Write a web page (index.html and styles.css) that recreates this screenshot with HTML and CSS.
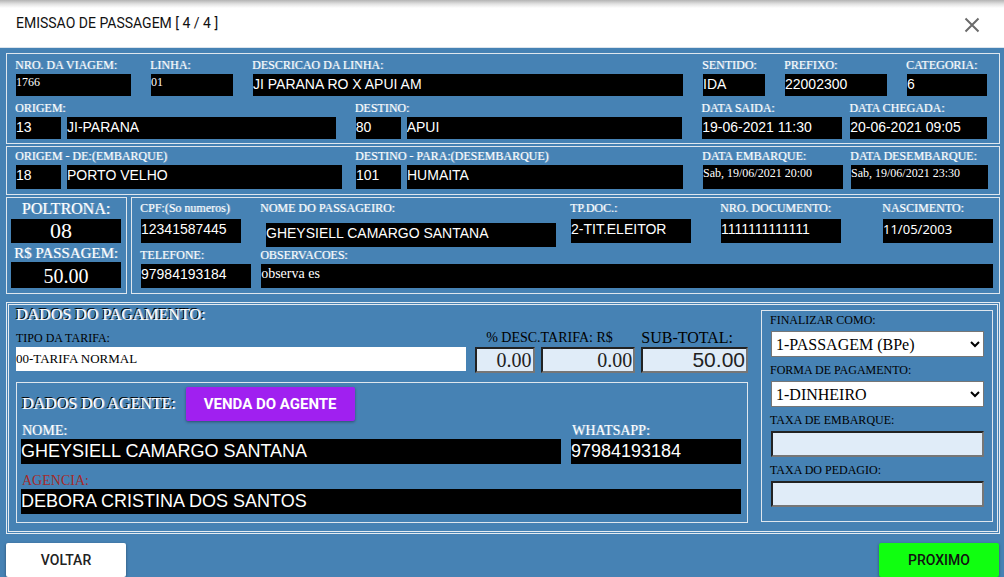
FILE: index.html
```html
<!DOCTYPE html>
<html lang="pt-BR">
<head>
<meta charset="utf-8">
<title>Emissao de Passagem</title>
<link rel="stylesheet" href="styles.css">
</head>
<body>
<header class="titlebar">
  <h1 class="title">EMISSAO DE PASSAGEM [ 4 / 4 ]</h1>
  <button class="close" type="button" aria-label="Fechar">
    <svg width="16" height="16" viewBox="0 0 16 16"><path d="M1.5 1.5 14.5 14.5M14.5 1.5 1.5 14.5" fill="none" stroke="#6b6b6b" stroke-width="2"/></svg>
  </button>
</header>
<form class="content">
  <section class="card trip">
    <div class="trip-line">
      <div class="field"><label for="viagem">NRO. DA VIAGEM:</label><input class="box serif" id="viagem" value="1766" readonly></div>
      <div class="field"><label for="linha">LINHA:</label><input class="box serif" id="linha" value="01" readonly></div>
      <div class="field"><label for="descricao">DESCRICAO DA LINHA:</label><input class="box raised" id="descricao" value="JI PARANA RO X APUI AM" readonly></div>
      <div class="field"><label for="sentido">SENTIDO:</label><input class="box raised" id="sentido" value="IDA" readonly></div>
      <div class="field"><label for="prefixo">PREFIXO:</label><input class="box raised" id="prefixo" value="22002300" readonly></div>
      <div class="field"><label for="categoria">CATEGORIA:</label><input class="box raised" id="categoria" value="6" readonly></div>
    </div>
    <div class="route">
      <div class="field"><label for="origem">ORIGEM:</label>
        <div class="pair"><input class="box raised" id="origem" value="13" readonly><input class="box raised" aria-label="Cidade de origem" value="JI-PARANA" readonly></div></div>
      <div class="field"><label for="destino">DESTINO:</label>
        <div class="pair"><input class="box raised" id="destino" value="80" readonly><input class="box raised" aria-label="Cidade de destino" value="APUI" readonly></div></div>
      <div class="dates">
        <div class="field"><label for="saida">DATA SAIDA:</label><input class="box raised" id="saida" value="19-06-2021 11:30" readonly></div>
        <div class="field"><label for="chegada">DATA CHEGADA:</label><input class="box raised" id="chegada" value="20-06-2021 09:05" readonly></div>
      </div>
    </div>
  </section>

  <section class="card boarding">
    <div class="route wide">
      <div class="field"><label for="embarque">ORIGEM - DE:(EMBARQUE)</label>
        <div class="pair"><input class="box tall" id="embarque" value="18" readonly><input class="box tall" aria-label="Cidade de embarque" value="PORTO VELHO" readonly></div></div>
      <div class="field"><label for="desembarque">DESTINO - PARA:(DESEMBARQUE)</label>
        <div class="pair"><input class="box tall" id="desembarque" value="101" readonly><input class="box tall" aria-label="Cidade de desembarque" value="HUMAITA" readonly></div></div>
      <div class="dates">
        <div class="field"><label for="dtemb">DATA EMBARQUE:</label><input class="box tall serif" id="dtemb" value="Sab, 19/06/2021 20:00" readonly></div>
        <div class="field"><label for="dtdes">DATA DESEMBARQUE:</label><input class="box tall serif" id="dtdes" value="Sab, 19/06/2021 23:30" readonly></div>
      </div>
    </div>
  </section>

  <div class="middle">
    <section class="card seat">
      <label class="seat-label" for="poltrona">POLTRONA:</label>
      <input class="box seat-number" id="poltrona" value="08" readonly>
      <label class="seat-label fare" for="passagem">R$ PASSAGEM:</label>
      <input class="box seat-price" id="passagem" value="50.00" readonly>
    </section>
    <section class="card passenger">
      <div class="passenger-line">
        <div class="field cpf"><label for="cpf">CPF:(So numeros)</label><input class="box tall" id="cpf" value="12341587445" readonly></div>
        <div class="field name"><label for="nome">NOME DO PASSAGEIRO:</label><input class="box tall" id="nome" value="GHEYSIELL CAMARGO SANTANA" readonly></div>
        <div class="field doc-type"><label for="tpdoc">TP.DOC.:</label><input class="box tall" id="tpdoc" value="2-TIT.ELEITOR" readonly></div>
        <div class="field doc"><label for="doc">NRO. DOCUMENTO:</label><input class="box tall" id="doc" value="1111111111111" readonly></div>
        <div class="field birth"><label for="nasc">NASCIMENTO:</label><input class="box tall" id="nasc" value="11/05/2003" readonly></div>
      </div>
      <div class="contact-line">
        <div class="field"><label for="fone">TELEFONE:</label><input class="box tall" id="fone" value="97984193184" readonly></div>
        <div class="field"><label for="obs">OBSERVACOES:</label><input class="box tall note" id="obs" value="observa es" readonly></div>
      </div>
    </section>
  </div>

  <section class="payment">
    <div class="payment-main">
      <h2 class="heading">DADOS DO PAGAMENTO:</h2>
      <div class="fare-line">
        <label class="dark" for="tarifa">TIPO DA TARIFA:</label>
        <label class="dark discount" for="desc">% DESC.TARIFA: R$</label>
        <label class="dark subtotal" for="sub">SUB-TOTAL:</label>
        <input class="tariff" id="tarifa" value="00-TARIFA NORMAL" readonly>
        <input class="sunken amount" id="desc" value="0.00">
        <input class="sunken amount" aria-label="Desconto em R$" value="0.00">
        <input class="sunken amount total" id="sub" value="50.00">
      </div>
      <section class="agent">
        <div class="agent-head">
          <h2 class="heading">DADOS DO AGENTE:</h2>
          <button class="btn purple" type="button">VENDA DO AGENTE</button>
        </div>
        <div class="agent-line">
          <div class="field"><label for="agente">NOME:</label><input class="box large" id="agente" value="GHEYSIELL CAMARGO SANTANA" readonly></div>
          <div class="field"><label for="whats">WHATSAPP:</label><input class="box large" id="whats" value="97984193184" readonly></div>
        </div>
        <div class="field agency"><label for="agencia">AGENCIA:</label><input class="box large" id="agencia" value="DEBORA CRISTINA DOS SANTOS" readonly></div>
      </section>
    </div>
    <section class="finish">
      <div class="option"><label class="dark" for="fin">FINALIZAR COMO:</label><select class="choice" id="fin"><option>1-PASSAGEM (BPe)</option></select></div>
      <div class="option"><label class="dark" for="forma">FORMA DE PAGAMENTO:</label><select class="choice" id="forma"><option>1-DINHEIRO</option></select></div>
      <div class="option"><label class="dark" for="taxa">TAXA DE EMBARQUE:</label><input class="sunken" id="taxa"></div>
      <div class="option"><label class="dark" for="pedagio">TAXA DO PEDAGIO:</label><input class="sunken" id="pedagio"></div>
    </section>
  </section>

  <footer class="actions">
    <button class="btn white" type="button">VOLTAR</button>
    <button class="btn green" type="button">PROXIMO</button>
  </footer>
</form>
</body>
</html>
```

FILE: styles.css
```css
* { box-sizing: border-box; }

body {
  margin: 0;
  min-height: 100vh;
  background: #4682b4;
  font-family: "Liberation Serif", "Times New Roman", serif;
  font-size: 12px;
  color: #fff;
}

input, select, button { margin: 0; min-width: 0; font: inherit; border-radius: 0; }
h1, h2 { margin: 0; font-weight: 400; }

/* Title bar */
.titlebar {
  display: flex;
  align-items: center;
  justify-content: space-between;
  height: 48px;
  padding: 0 23px 0 16px;
  background: linear-gradient(#b4b4b4, #e2e2e2 4px, #fff 8px);
  border-bottom: 1px solid #dce4ec;
}
.title {
  padding-bottom: 1px;
  font: 400 14px/20px Roboto, sans-serif;
  color: #111;
}
.close {
  display: flex;
  padding: 3px 1px 0;
  border: 0;
  background: none;
}

/* Cards */
.content { padding: 5px 4px 0 6px; }
.card { border: 1px solid #dfe7ee; margin-bottom: 2px; }
.trip { padding: 4px 12px 4px 9px; }
.boarding { padding: 2px 11px 5px 9px; }

.field { display: flex; flex-direction: column; min-width: 0; }
.field label {
  margin: 0 0 2px -1px;
  line-height: 14px;
  white-space: nowrap;
  text-shadow: 1px 0 0 rgba(255, 255, 255, 0.4);
}
.box {
  width: 100%;
  height: 22px;
  padding: 0;
  border: 0;
  background: #000;
  color: #fff;
  font-family: "Liberation Sans", Arial, sans-serif;
  font-size: 14px;
}
.box.raised { padding-bottom: 2px; }
.box.tall { height: 24px; padding-bottom: 4px; }
.box.serif {
  padding-bottom: 6px;
  font-family: "Liberation Serif", "Times New Roman", serif;
  font-size: 12px;
}
.box.tall.serif { padding-bottom: 8px; }

.trip-line {
  display: grid;
  grid-template-columns: 115fr 82fr 430fr 62fr 102fr 80fr;
  gap: 20px;
  margin-bottom: 5px;
}
.route {
  display: grid;
  grid-template-columns: 320fr 327fr 285fr;
  gap: 20px;
}
.route.wide { grid-template-columns: 326fr 327fr 291fr; gap: 14px; }
.route.wide .dates { padding-left: 6px; }
.pair { display: grid; grid-template-columns: 45px 1fr; gap: 6px; }
.dates { display: grid; grid-template-columns: 140fr 137fr; gap: 8px; }

/* Seat and passenger */
.middle {
  display: grid;
  grid-template-columns: 121px 1fr;
  gap: 4px;
  margin-bottom: 8px;
}
.middle .card { margin-bottom: 0; }
.seat { display: flex; flex-direction: column; padding: 2px 5px 5px 4px; }
.seat-label {
  margin-bottom: 1px;
  font-size: 16px;
  line-height: 18px;
  text-align: center;
  white-space: nowrap;
  text-shadow: 1px 0 0 rgba(255, 255, 255, 0.4);
}
.seat-label.fare { margin: 1px 0 0; font-size: 15px; }
.seat-number, .seat-price {
  text-align: center;
  font-family: "Liberation Serif", "Times New Roman", serif;
}
.seat-number { height: 24px; padding: 0 10px 0 0; font-size: 22px; }
.seat-price { height: 26px; padding-top: 2px; font-size: 20px; }

.passenger { padding: 3px 6px 5px 9px; }
.passenger-line { display: flex; margin-bottom: 1px; }
.passenger-line label { margin-bottom: 4px; }
.cpf { flex: 100 1 0; }
.name { flex: 295 1 0; margin-left: 20px; }
.name .box { width: auto; margin: 4px 0 0 5px; }
.doc-type { flex: 120 1 0; margin-left: 15px; }
.doc { flex: 120 1 0; margin-left: 30px; }
.birth { flex: 110 1 0; margin-left: 42px; }
.birth .box { font-family: "Noto Sans", sans-serif; font-size: 13px; }
.contact-line { display: grid; grid-template-columns: 110fr 731fr; gap: 10px; }
.box.note { font-family: "Liberation Serif", "Times New Roman", serif; }

/* Payment */
.payment {
  display: grid;
  grid-template-columns: 732fr 232fr;
  gap: 13px;
  padding: 0 4px 8px 7px;
  border: 3px double #e4ebf1;
}
.payment-main { padding-top: 1px; min-width: 0; }
.heading {
  font-size: 16px;
  line-height: 18px;
  white-space: nowrap;
  text-shadow: 1px 0 0 rgba(255, 255, 255, 0.5), -1px -1px 0 #000;
}
.dark { color: #000; white-space: nowrap; }
.fare-line {
  display: grid;
  grid-template-columns: 450fr 59fr 94fr 106fr;
  column-gap: 6px;
  margin: 5px 0 9px;
}
.fare-line .dark { line-height: 18px; }
.fare-line .tariff { margin-right: 3px; }
.fare-line .discount { grid-column: span 2; padding-left: 11px; font-size: 14px; }
.fare-line .subtotal { font-size: 16px; }
.tariff {
  height: 24px;
  padding: 0;
  border: 0;
  background: #fff;
  color: #000;
  font-size: 13px;
}
.sunken {
  width: 100%;
  height: 26px;
  padding: 0 1px;
  border: 2px solid;
  border-color: #222 #767676 #767676 #222;
  background: #e0ecf8;
  color: #222;
}
.amount { text-align: right; font-size: 20px; }
.total { font-family: "Liberation Sans", Arial, sans-serif; font-size: 21px; }

/* Agent */
.agent { padding: 4px 6px 8px 4px; border: 1px solid #dfe7ee; }
.agent-head { display: flex; align-items: center; margin-bottom: 2px; padding-left: 1px; gap: 10px; }
.agent .field label { margin: 0 0 0 1px; font-size: 14px; line-height: 16px; }
.agent-line { display: grid; grid-template-columns: 540fr 170fr; gap: 10px; margin-bottom: 9px; }
.agent .agency label { color: #a52a2a; text-shadow: none; }
.box.large { height: 25px; font-size: 18px; }

/* Finish panel */
.finish {
  margin: 5px 0 1px;
  padding: 1px 8px 0 9px;
  border: 1px solid #dfe7ee;
}
.option { display: flex; flex-direction: column; gap: 3px; margin-bottom: 5px; }
.option .dark { margin-left: -1px; line-height: 16px; }
.choice {
  width: 100%;
  height: 26px;
  padding: 0;
  border: 1px solid #767676;
  background: #fff;
  color: #000;
  font-size: 16px;
}

/* Buttons */
.actions { display: flex; justify-content: space-between; padding: 9px 1px 0 0; }
.btn {
  min-width: 120px;
  height: 34px;
  padding: 0 18px;
  border: 0;
  border-radius: 2px;
  font: 500 14px/34px Roboto, sans-serif;
  box-shadow: 0 1px 3px rgba(0, 0, 0, 0.4);
}
.white { background: #fff; color: #222; }
.green { background: #10ff10; color: #111; }
.purple { background: #a020f0; color: #fff; font-size: 15px; font-weight: 700; }
```
